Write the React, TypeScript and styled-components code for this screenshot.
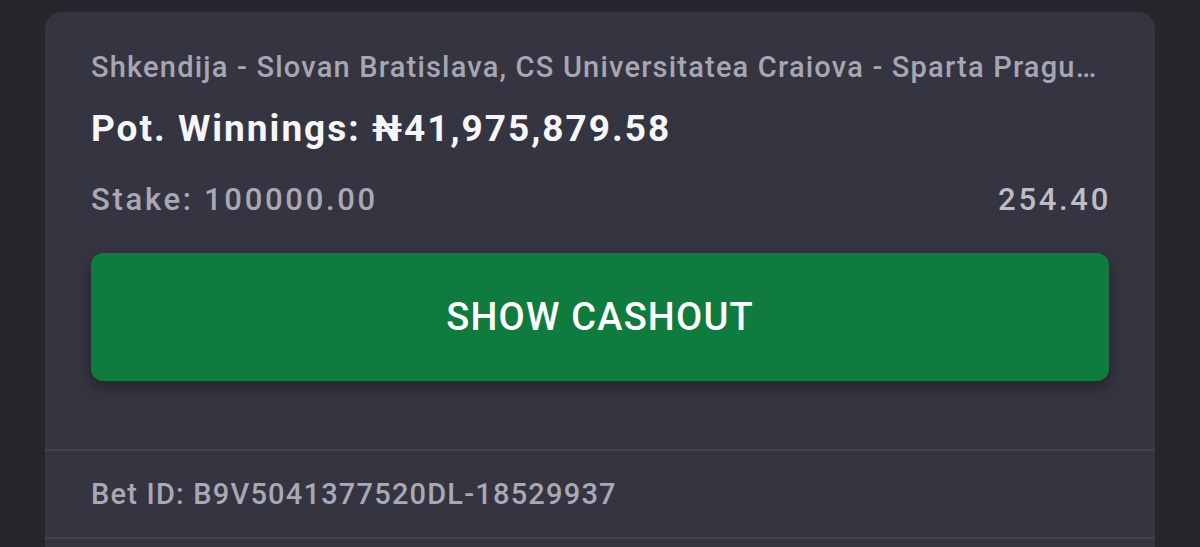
import React from 'react';
import styled, { createGlobalStyle } from 'styled-components';

const GlobalStyle = createGlobalStyle`
    html, body {
        margin: 0;
        padding: 0;
        background: #25272c;
        font-family: Roboto, "Liberation Sans", sans-serif;
        -webkit-font-smoothing: antialiased;
    }
`;

const Page = styled.div`
    width: 1200px;
    height: 547px;
    overflow: hidden;
    padding: 12px 45px 0 45px;
    box-sizing: border-box;
`;

const Card = styled.div`
    background: #343541;
    border-radius: 16px 16px 0 0;
    height: 100%;
    display: flex;
    flex-direction: column;
`;

const Body = styled.div`
    padding: 36px 46px 0 46px;
    height: 439px;
    flex-shrink: 0;
    box-sizing: border-box;
    border-bottom: 2px solid #42434f;
`;

const Events = styled.div`
    font-size: 29px;
    font-weight: 500;
    color: #a7a6b2;
    line-height: 38px;
    white-space: nowrap;
    letter-spacing: 1.2px;
`;

const Winnings = styled.div`
    margin-top: 21px;
    font-size: 37px;
    font-weight: 700;
    color: #f6f6f8;
    line-height: 44px;
    letter-spacing: 2px;
`;

const StakeRow = styled.div`
    margin-top: 30px;
    display: flex;
    justify-content: space-between;
    font-size: 31px;
    font-weight: 500;
    line-height: 38px;
    letter-spacing: 2.7px;
`;

const StakeText = styled.span<{ bright?: boolean }>`
    color: ${props => props.bright ? '#bebdc7' : '#a9a8b4'};
    margin-right: ${props => props.bright ? '-2px' : '0'};
`;

const CashoutButton = styled.button`
    display: block;
    margin-top: 34px;
    width: 100%;
    height: 128px;
    border: none;
    border-radius: 12px;
    background: #0f7b3e;
    color: #ffffff;
    font-family: Roboto, "Liberation Sans", sans-serif;
    font-size: 38px;
    font-weight: 500;
    letter-spacing: 1.2px;
    box-shadow: 0 6px 14px rgba(0, 0, 0, 0.35);
    cursor: pointer;
`;

const IdRow = styled.div`
    padding: 0 46px;
    height: 88px;
    flex-shrink: 0;
    display: flex;
    align-items: center;
    font-size: 29px;
    font-weight: 500;
    color: #a9a8b4;
    letter-spacing: 1.2px;
    border-bottom: 2px solid #42434f;
    box-sizing: border-box;
`;

export default function App() {
    return (
        <>
            <GlobalStyle />
            <Page>
                <Card>
                    <Body>
                        <Events>Shkendija - Slovan Bratislava, CS Universitatea Craiova - Sparta Pragu…</Events>
                        <Winnings>Pot. Winnings: ₦41,975,879.58</Winnings>
                        <StakeRow>
                            <StakeText>Stake: 100000.00</StakeText>
                            <StakeText bright>254.40</StakeText>
                        </StakeRow>
                        <CashoutButton>SHOW CASHOUT</CashoutButton>
                    </Body>
                    <IdRow>Bet ID: B9V5041377520DL-18529937</IdRow>
                </Card>
            </Page>
        </>
    );
}
